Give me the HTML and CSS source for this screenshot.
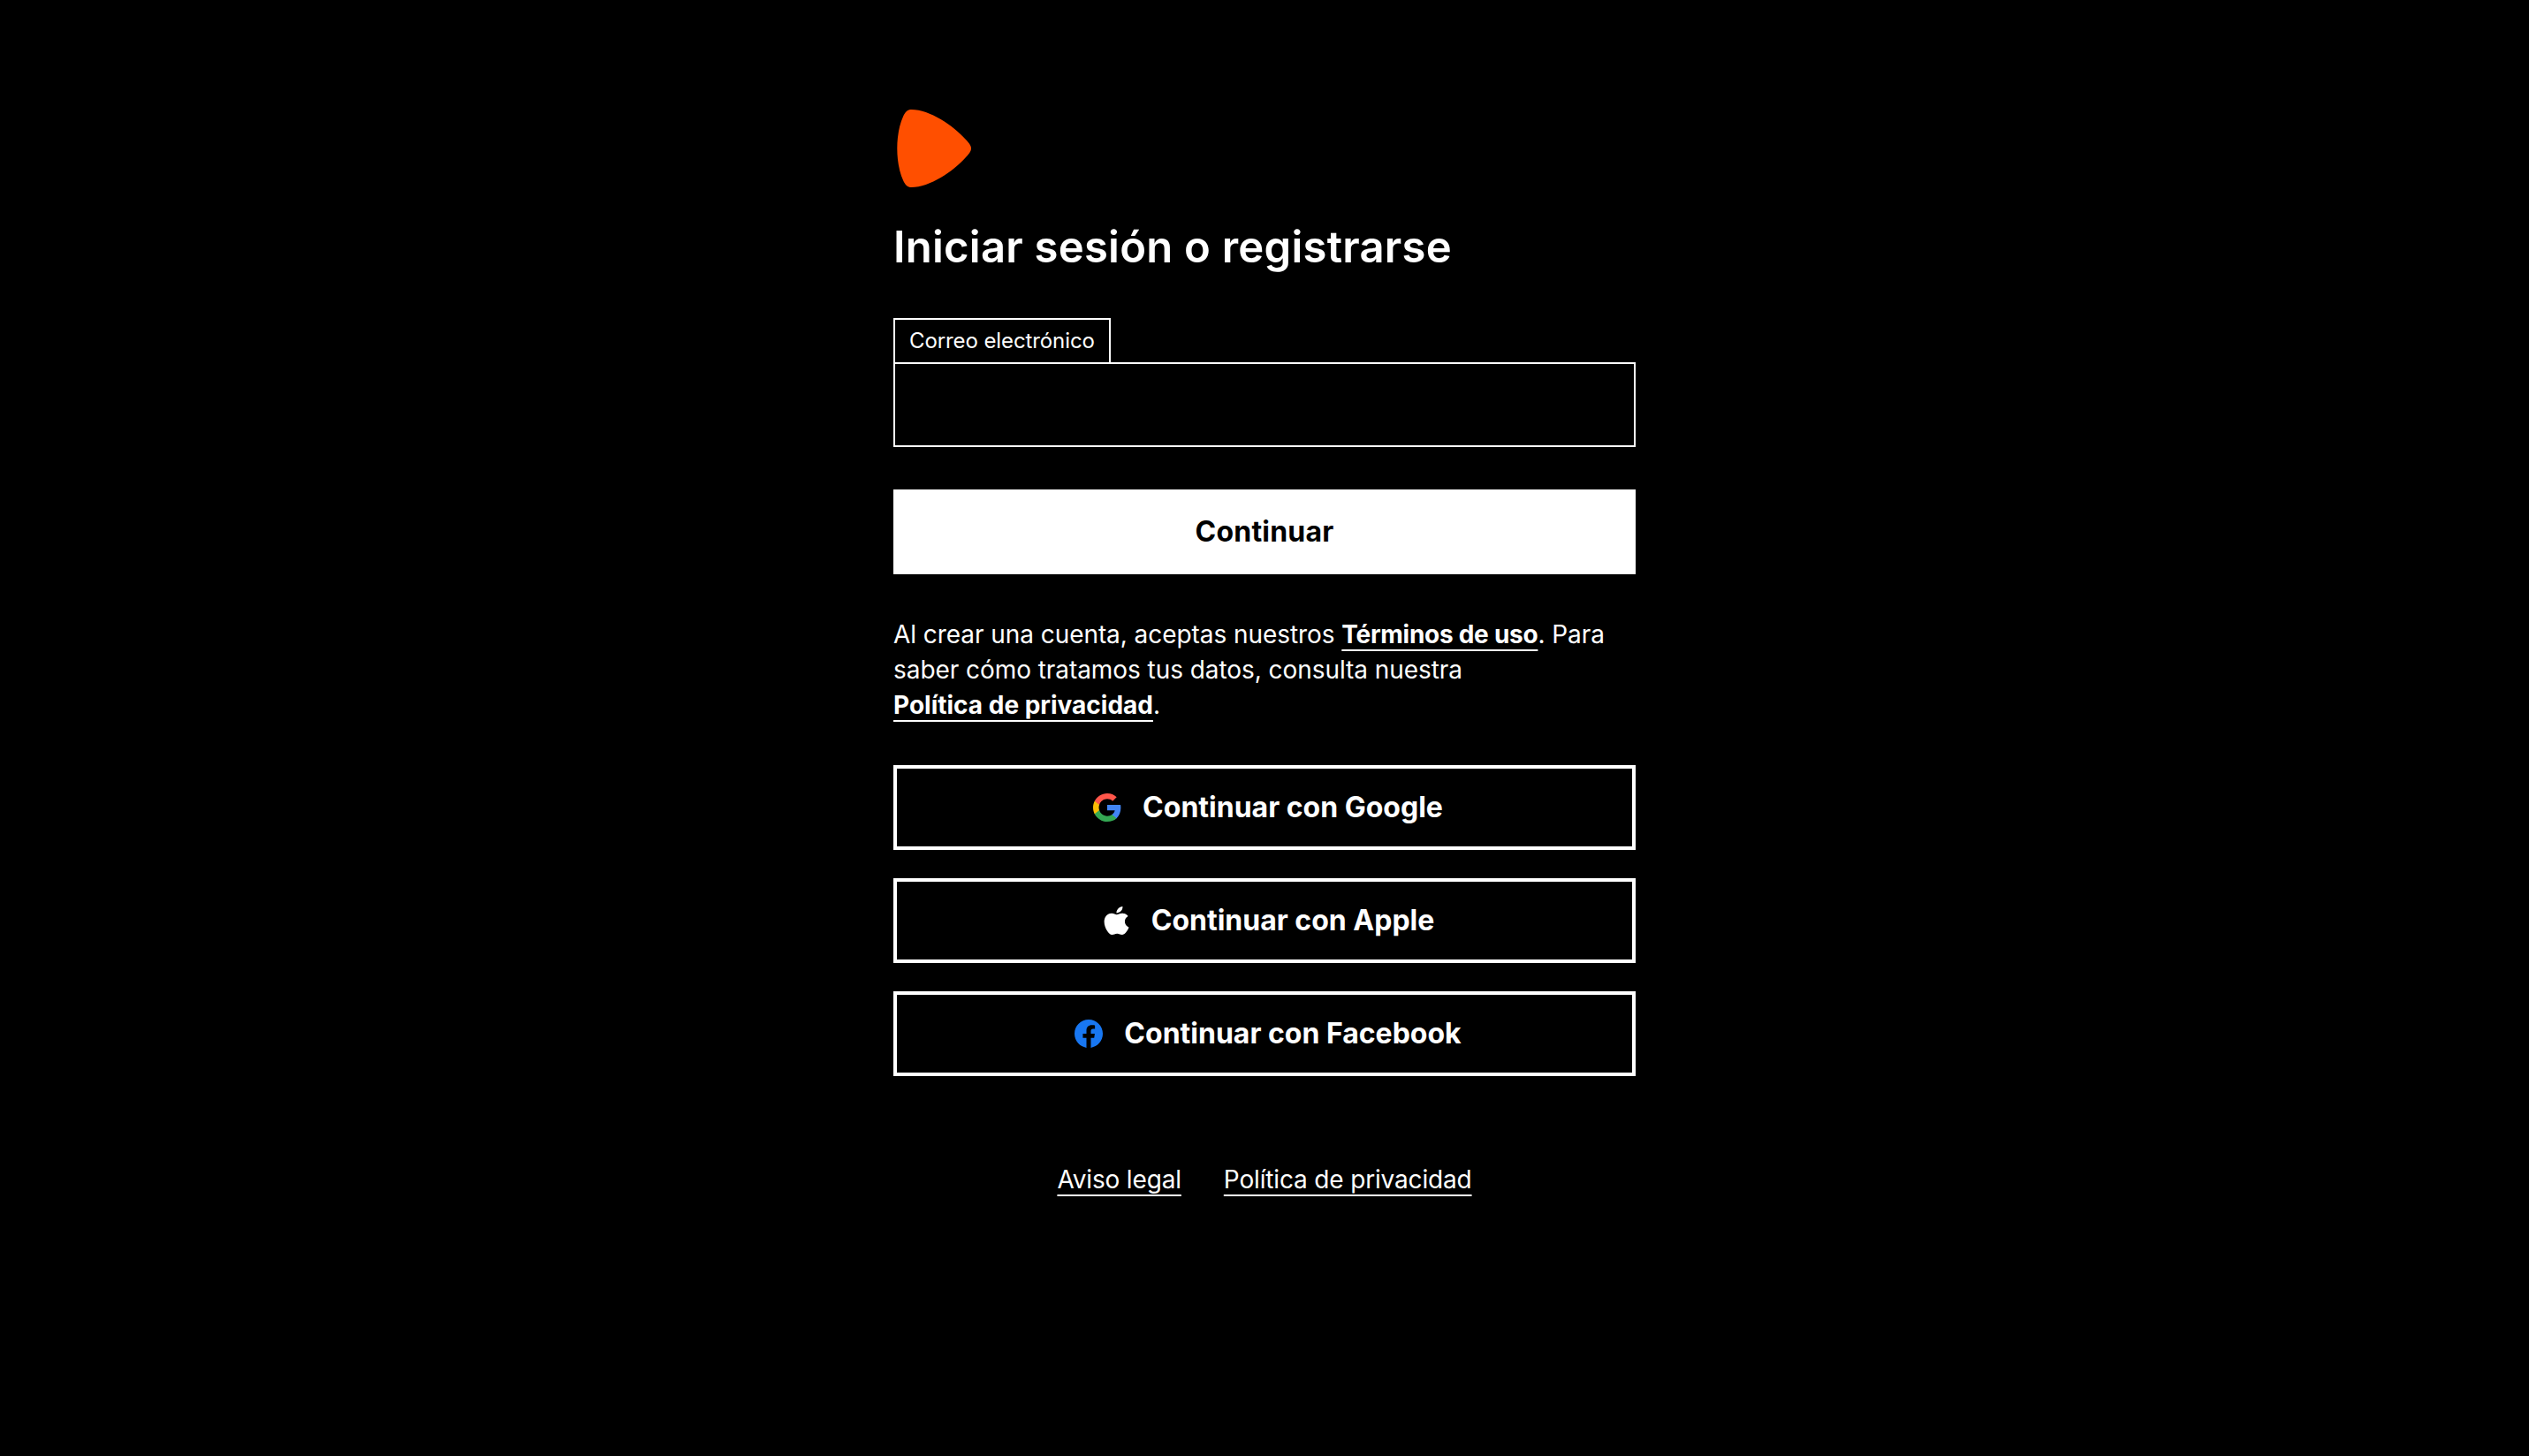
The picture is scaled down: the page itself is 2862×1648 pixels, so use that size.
FILE: index.html
```
<!DOCTYPE html>
<html lang="es">
    <head>
        <meta charset="UTF-8" />
        <meta name="viewport" content="width=device-width, initial-scale=1.0" />
        <title>Iniciar sesión o registrarse</title>
        <link rel="stylesheet" href="styles.css">
    </head>
    <body>
        <main class="login">
            <svg class="logo" viewBox="15 14 84 88" aria-hidden="true">
                <path fill="#ff4f00" d="M31.5 14C52 14 79 32 93 48C97 52.500 99 55 99 58C99 61 97 63.500 93 68C79 84 52 102 31.5 102C27 102 24.500 99.500 22 94C17.500 84 15.300 71 15.300 58C15.300 45 17.500 32 22 22C24.500 16.500 27 14 31.5 14Z"/>
            </svg>
            <h1>Iniciar sesión o registrarse</h1>
            <form>
                <label class="label" for="email">Correo electrónico</label>
                <input class="input" type="email" name="email" id="email">
                <button class="btn btn-primary" type="submit">Continuar</button>
            </form>
            <p class="terms">Al crear una cuenta, aceptas nuestros <a class="uso" href="#">Términos de uso</a>. Para saber cómo tratamos tus datos, consulta nuestra <a href="#">Política de privacidad</a>.</p>
            <div class="social">
                <button class="btn btn-outline" type="button">
                    <svg class="icon" viewBox="1 1 22 22" aria-hidden="true">
                        <path fill="#4285f4" d="M22.56 12.25c0-.78-.07-1.53-.2-2.25H12v4.26h5.92c-.26 1.37-1.04 2.53-2.21 3.31v2.77h3.57c2.08-1.92 3.28-4.74 3.28-8.09z"/>
                        <path fill="#34a853" d="M12 23c2.97 0 5.46-.98 7.28-2.66l-3.57-2.77c-.98.66-2.23 1.06-3.71 1.06-2.86 0-5.29-1.93-6.16-4.53H2.18v2.84C3.99 20.53 7.7 23 12 23z"/>
                        <path fill="#fbbc04" d="M5.84 14.09c-.22-.66-.35-1.36-.35-2.09s.13-1.43.35-2.09V7.07H2.18C1.43 8.55 1 10.22 1 12s.43 3.45 1.18 4.93l2.85-2.22.81-.62z"/>
                        <path fill="#ff564a" d="M12 5.38c1.62 0 3.06.56 4.21 1.64l3.15-3.15C17.45 2.09 14.97 1 12 1 7.7 1 3.99 3.47 2.18 7.07l3.66 2.84c.87-2.6 3.3-4.53 6.16-4.53z"/>
                    </svg>
                    <span>Continuar con Google</span>
                </button>
                <button class="btn btn-outline" type="button">
                    <svg class="icon" viewBox="0.4 0 22.4 24" preserveAspectRatio="none" aria-hidden="true">
                        <path fill="#fff" d="M12.152 6.896c-.948 0-2.415-1.078-3.96-1.04-2.04.027-3.91 1.183-4.961 3.014-2.117 3.675-.546 9.103 1.519 12.09 1.013 1.454 2.208 3.09 3.792 3.039 1.52-.065 2.09-.987 3.935-.987 1.831 0 2.35.987 3.96.948 1.637-.026 2.676-1.48 3.676-2.948 1.156-1.688 1.636-3.325 1.662-3.415-.039-.013-3.182-1.221-3.22-4.857-.026-3.04 2.48-4.494 2.597-4.559-1.429-2.09-3.623-2.324-4.39-2.376-2-.156-3.675 1.09-4.61 1.09zM15.53 3.83c.843-1.012 1.4-2.427 1.245-3.83-1.207.052-2.662.805-3.532 1.818-.78.896-1.454 2.338-1.273 3.714 1.338.104 2.715-.688 3.559-1.701"/>
                    </svg>
                    <span>Continuar con Apple</span>
                </button>
                <button class="btn btn-outline" type="button">
                    <svg class="icon" viewBox="0 0 24 24" aria-hidden="true">
                        <path fill="#1877f2" d="M24 12.073c0-6.627-5.373-12-12-12s-12 5.373-12 12c0 5.99 4.388 10.954 10.125 11.854v-8.385H7.078v-3.47h3.047V9.43c0-3.007 1.792-4.669 4.533-4.669 1.312 0 2.686.235 2.686.235v2.953H15.83c-1.491 0-1.956.925-1.956 1.874v2.25h3.328l-.532 3.47h-2.796v8.385C19.612 23.027 24 18.062 24 12.073z"/>
                    </svg>
                    <span>Continuar con Facebook</span>
                </button>
            </div>
            <footer>
                <a href="#">Aviso legal</a>
                <a href="#">Política de privacidad</a>
            </footer>
        </main>
    </body>
</html>
```
FILE: styles.css
```
* {
    box-sizing: border-box;
}
body {
    margin: 0;
    background: #000;
    color: #fff;
    font: normal 28px/40px Inter, "Liberation Sans", sans-serif;
}
.login {
    width: 840px;
    margin: auto;
    padding-top: 124px;
}
.logo {
    display: block;
    width: 84px;
    height: 88px;
    margin-left: 4px;
}
h1 {
    margin: 40px 0 52px;
    font-size: 49px;
    font-weight: 600;
    line-height: 56px;
    letter-spacing: 0.24px;
}
.label {
    display: block;
    width: 246px;
    height: 50px;
    padding-left: 16px;
    border: 2px solid #fff;
    border-bottom: 0;
    font-size: 24px;
    line-height: 48px;
    letter-spacing: -0.1px;
    white-space: nowrap;
}
.input {
    display: block;
    width: 100%;
    height: 96px;
    padding: 0 16px;
    background: #000;
    border: 2px solid #fff;
    border-radius: 0;
    color: #fff;
    font: inherit;
    outline: none;
}
.btn {
    display: flex;
    align-items: center;
    justify-content: center;
    width: 100%;
    height: 96px;
    padding: 0;
    border: 4px solid #fff;
    font: bold 32px/40px Inter, "Liberation Sans", sans-serif;
    cursor: pointer;
}
.btn-primary {
    margin-top: 48px;
    background: #fff;
    color: #000;
    letter-spacing: 0.2px;
}
.btn-outline {
    background: #000;
    color: #fff;
}
.icon {
    width: 32px;
    height: 32px;
    margin: 0 24px 0 8px;
}
.terms {
    margin: 48px 0;
    letter-spacing: -0.06px;
}
a {
    color: #fff;
    text-decoration: underline 2px;
    text-underline-offset: 7px;
    text-decoration-skip-ink: none;
}
.terms a {
    font-weight: bold;
    letter-spacing: 0;
    white-space: nowrap;
}
.terms .uso {
    letter-spacing: -0.27px;
}
.social {
    display: flex;
    flex-direction: column;
    gap: 32px;
}
footer {
    display: flex;
    justify-content: center;
    gap: 48px;
    margin-top: 97px;
    letter-spacing: -0.16px;
}
```
